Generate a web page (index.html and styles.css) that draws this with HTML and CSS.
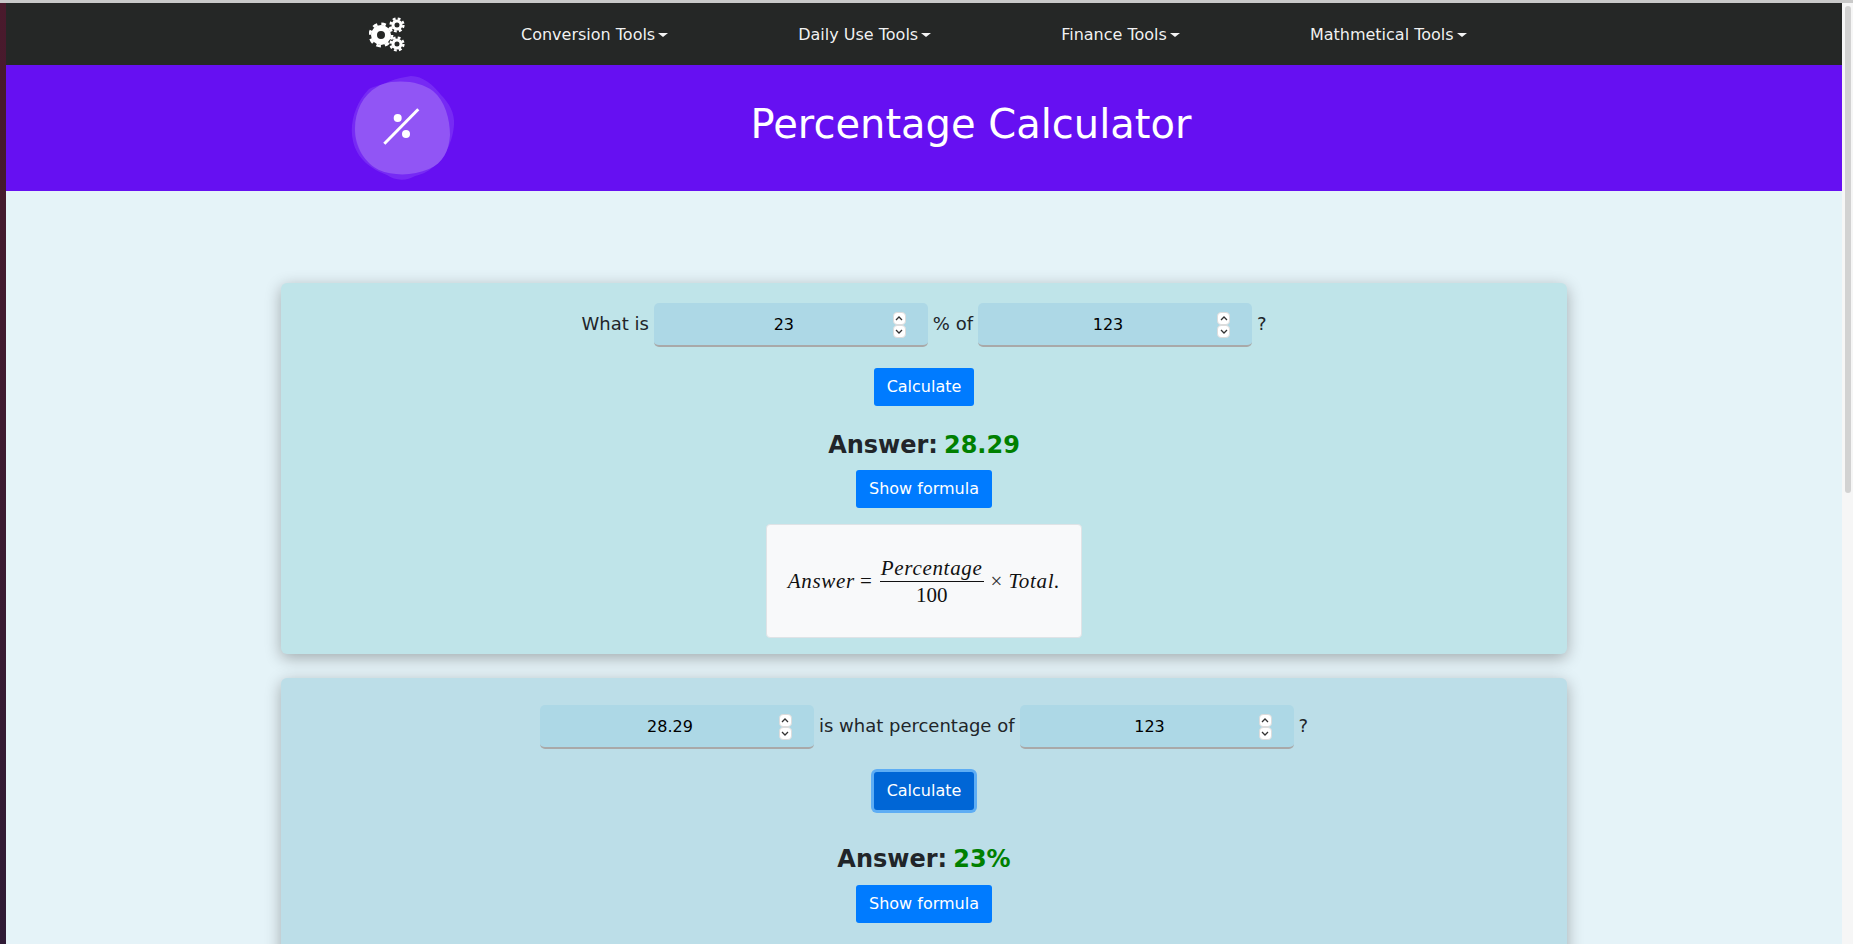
FILE: index.html
```html
<!DOCTYPE html>
<html lang="en">
<head>
<meta charset="utf-8">
<title>Percentage Calculator</title>
<link rel="stylesheet" href="styles.css">
</head>
<body>
<div class="topline"></div>
<div class="window">
  <div class="desktop-edge"></div>
  <div class="page">
    <nav class="navbar">
      <div class="container nav-inner">
        <svg class="brand" viewBox="0 0 36 36" width="36" height="36" aria-label="Tools">
          <g fill="none" stroke="#fff">
            <circle cx="12" cy="19" r="7" stroke-width="6"/>
            <circle cx="12" cy="19" r="11" stroke-width="2.8" stroke-dasharray="4.6 4.04"/>
            <circle cx="28" cy="9" r="4" stroke-width="3"/>
            <circle cx="28" cy="9" r="6.4" stroke-width="2.4" stroke-dasharray="2.8 2.22"/>
            <circle cx="28" cy="28" r="4" stroke-width="3"/>
            <circle cx="28" cy="28" r="6.4" stroke-width="2.4" stroke-dasharray="2.8 2.22"/>
          </g>
        </svg>
        <ul class="menu">
          <li class="menu-item">Conversion Tools</li>
          <li class="menu-item">Daily Use Tools</li>
          <li class="menu-item">Finance Tools</li>
          <li class="menu-item">Mathmetical Tools</li>
        </ul>
      </div>
    </nav>
    <header class="hero">
      <div class="container hero-inner">
        <svg class="hero-icon" viewBox="0 0 104 106" width="104" height="106" aria-hidden="true">
          <path class="blob-soft" d="M60 1C72 1 82 10 90 20C98 28 104 38 103 50C102 64 96 78 88 86C78 96 62 98 50 98C30 98 12 88 6 70C0 52 6 30 18 18C30 8 46 3 60 1Z"/>
          <path class="blob-soft" d="M18 14C34 6 60 6 78 14C94 24 100 46 98 66C94 84 80 98 64 101C56 106 44 106 36 100C20 94 6 84 2 66C-2 50 4 28 18 14Z"/>
          <path class="blob-main" d="M40 7C56 5 72 8 82 16C94 26 99 44 99 60C98 76 92 88 78 94C62 101 42 101 28 95C14 88 4 72 4 54C4 36 12 20 26 12C30 9 36 8 40 7Z"/>
          <line x1="33.3" y1="68.7" x2="67.3" y2="34.3" stroke="#fff" stroke-width="3"/>
          <circle cx="46.7" cy="43" r="4" fill="#fff"/>
          <circle cx="55" cy="59" r="4" fill="#fff"/>
        </svg>
        <h1 class="hero-title">Percentage Calculator</h1>
      </div>
    </header>
    <main class="content">
      <section class="card card-one">
        <div class="question">
          <span>What is</span>
          <div class="field">
            <input class="num" type="number" value="23">
            <div class="spin">
              <span class="spin-part"><svg viewBox="0 0 8 5" width="8" height="5"><path d="M1 4L4 1L7 4"/></svg></span>
              <span class="spin-part"><svg viewBox="0 0 8 5" width="8" height="5"><path d="M1 1L4 4L7 1"/></svg></span>
            </div>
          </div>
          <span>% of</span>
          <div class="field">
            <input class="num" type="number" value="123">
            <div class="spin">
              <span class="spin-part"><svg viewBox="0 0 8 5" width="8" height="5"><path d="M1 4L4 1L7 4"/></svg></span>
              <span class="spin-part"><svg viewBox="0 0 8 5" width="8" height="5"><path d="M1 1L4 4L7 1"/></svg></span>
            </div>
          </div>
          <span>?</span>
        </div>
        <button class="btn calc-one" type="button">Calculate</button>
        <p class="answer answer-one"><span class="answer-label">Answer:</span><span class="result">28.29</span></p>
        <button class="btn" type="button">Show formula</button>
        <div class="formula">
          <span class="math">Answer</span>
          <span class="op eq">=</span>
          <span class="frac">
            <span class="math frac-top">Percentage</span>
            <span class="frac-bottom">100</span>
          </span>
          <span class="op times">×</span>
          <span class="math">Total.</span>
        </div>
      </section>
      <section class="card card-two">
        <div class="question">
          <div class="field">
            <input class="num" type="number" value="28.29">
            <div class="spin">
              <span class="spin-part"><svg viewBox="0 0 8 5" width="8" height="5"><path d="M1 4L4 1L7 4"/></svg></span>
              <span class="spin-part"><svg viewBox="0 0 8 5" width="8" height="5"><path d="M1 1L4 4L7 1"/></svg></span>
            </div>
          </div>
          <span>is what percentage of</span>
          <div class="field">
            <input class="num" type="number" value="123">
            <div class="spin">
              <span class="spin-part"><svg viewBox="0 0 8 5" width="8" height="5"><path d="M1 4L4 1L7 4"/></svg></span>
              <span class="spin-part"><svg viewBox="0 0 8 5" width="8" height="5"><path d="M1 1L4 4L7 1"/></svg></span>
            </div>
          </div>
          <span>?</span>
        </div>
        <button class="btn btn-focus" type="button">Calculate</button>
        <p class="answer answer-two"><span class="answer-label">Answer:</span><span class="result">23%</span></p>
        <button class="btn" type="button">Show formula</button>
      </section>
    </main>
  </div>
  <div class="scrollbar"><div class="thumb"></div></div>
</div>
</body>
</html>
```
FILE: styles.css
```css
* { box-sizing: border-box; }
html, body { margin: 0; height: 100%; overflow: hidden; }
body {
  font-family: "DejaVu Sans", sans-serif;
  font-size: 16px;
  color: #212529;
  display: flex;
  flex-direction: column;
  background: #e5f3f8;
}
.topline { height: 3px; background: #c9c9c9; flex: none; }
.window { flex: 1; display: flex; min-height: 0; }
.desktop-edge { width: 6px; flex: none; background: linear-gradient(#4a1a2c, #2f1a35); }
.page { flex: 1; min-width: 0; overflow: hidden; background: #e5f3f8; }
.scrollbar { width: 11px; flex: none; background: #f6f6f6; padding: 3px 2px 0 3px; }
.thumb { height: 487px; background: #d2d2d2; border-radius: 3px; }

.container { width: 1140px; margin: 0 auto; }
.navbar { height: 62px; background: #252726; }
.nav-inner { height: 100%; display: flex; align-items: center; padding-left: 15px; }
.brand { flex: none; margin-right: 116px; }
.menu { display: flex; gap: 130px; list-style: none; margin: 0; padding: 0; color: rgba(255,255,255,.95); }
.menu-item { white-space: nowrap; }
.menu-item::after {
  content: "";
  display: inline-block;
  margin-left: 3px;
  vertical-align: 3px;
  border-top: 4.8px solid;
  border-left: 5.2px solid transparent;
  border-right: 5.2px solid transparent;
}

.hero { height: 126px; background: #6610f2; }
.hero-inner { height: 100%; display: flex; align-items: center; }
.hero-icon { flex: none; margin-left: -3px; }
.hero-title { flex: 1; margin: 0 7px 9px 0; text-align: center; color: #fff; font-weight: 400; font-size: 40px; line-height: 1.2; }
.blob-soft { fill: #7c33f4; opacity: .75; }
.blob-main { fill: #9155f5; }

.content { padding-top: 92px; display: flex; flex-direction: column; align-items: center; gap: 24px; }
.card {
  width: 1286px;
  border-radius: 6px;
  box-shadow: 0 4px 16px rgba(0,0,0,.3);
  display: flex;
  flex-direction: column;
  align-items: center;
  flex: none;
}
.card-one { background: #bfe4e9; padding: 20px 0 16px; }
.card-two { background: #bcdee8; padding: 27px 0 40px; }
.question { display: flex; align-items: center; gap: 5px; font-size: 18px; line-height: 26px; white-space: nowrap; }
.question > span { padding-bottom: 3px; }
.field { position: relative; flex: none; }
.num {
  display: block;
  width: 274px;
  height: 44px;
  border: 0;
  border-bottom: 2px solid #a9a9a9;
  border-radius: 5px;
  background: #add8e6;
  color: #000;
  font: inherit;
  font-size: 16px;
  line-height: 24px;
  text-align: center;
  padding: 0 26px 0 12px;
  outline: none;
  appearance: textfield;
}
.num::-webkit-inner-spin-button { appearance: none; margin: 0; }
.spin {
  position: absolute;
  top: 9px;
  right: 22px;
  width: 13px;
  display: flex;
  flex-direction: column;
}
.spin-part {
  height: 13px;
  background: #fff;
  border: 1px solid #dcdcdc;
  border-radius: 4px;
  display: flex;
  align-items: center;
  justify-content: center;
}
.spin-part svg { fill: none; stroke: #333; stroke-width: 1.3; }
.btn {
  font: inherit;
  line-height: 24px;
  height: 38px;
  padding: 6px 13px;
  border: 0;
  border-radius: 3px;
  color: #fff;
  background: #007bff;
  cursor: pointer;
}
.calc-one { margin-top: 21px; }
.btn-focus { margin-top: 23px; background: #0066d6; box-shadow: 0 0 0 3px rgba(0,123,255,.5); }
.answer { margin: 0; display: flex; gap: 6px; font-size: 24px; font-weight: 700; line-height: 28px; }
.answer-one { margin: 25px 0 11px; }
.answer-two { margin: 35px 0 12px; }
.result { color: #008000; }

.formula {
  margin-top: 16px;
  width: 316px;
  height: 114px;
  background: #f8f9fa;
  border: 1px solid #dfe3e6;
  border-radius: 4px;
  display: flex;
  align-items: center;
  justify-content: center;
  font-family: "Liberation Serif", serif;
  font-size: 21px;
  color: #111;
}
.math { font-style: italic; letter-spacing: .7px; }
.op { font-size: 21px; }
.eq { margin: 0 8px 0 5px; }
.times { margin: 0 6px 0 7px; color: #333; }
.frac { display: flex; flex-direction: column; align-items: center; }
.frac-top { padding: 0 1px; border-bottom: 1.5px solid #111; line-height: 26px; }
.frac-bottom { line-height: 26px; }
```
